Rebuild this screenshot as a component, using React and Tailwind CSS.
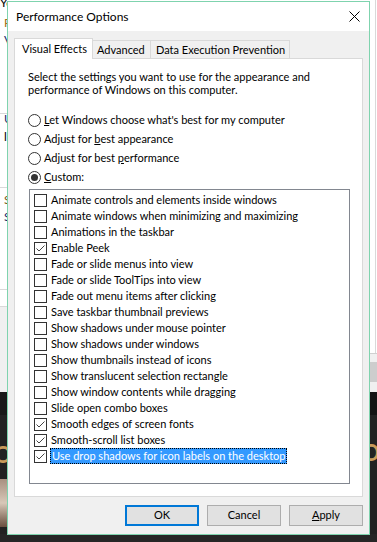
import React from "react";

const items = [
  ["Animate controls and elements inside windows", false],
  ["Animate windows when minimizing and maximizing", false],
  ["Animations in the taskbar", false],
  ["Enable Peek", true],
  ["Fade or slide menus into view", false],
  ["Fade or slide ToolTips into view", false],
  ["Fade out menu items after clicking", false],
  ["Save taskbar thumbnail previews", false],
  ["Show shadows under mouse pointer", false],
  ["Show shadows under windows", false],
  ["Show thumbnails instead of icons", false],
  ["Show translucent selection rectangle", false],
  ["Show window contents while dragging", false],
  ["Slide open combo boxes", false],
  ["Smooth edges of screen fonts", true],
  ["Smooth-scroll list boxes", true],
  ["Use drop shadows for icon labels on the desktop", true, true],
];

function Radio({ checked, children }) {
  return (
    <div className="flex items-center h-[19px]">
      <span className="w-[13px] h-[13px] rounded-full border border-[#333] bg-white flex items-center justify-center shrink-0">
        {checked && <span className="w-[7px] h-[7px] rounded-full bg-[#333]" />}
      </span>
      <span className="ml-[3px]">{children}</span>
    </div>
  );
}

function Check({ checked }) {
  return (
    <span className="w-[13px] h-[13px] border border-[#333] bg-white shrink-0 flex">
      {checked && (
        <svg width="11" height="11" viewBox="0 0 11 11">
          <polyline points="1.5,5.5 4,8 9.5,2.5" fill="none" stroke="#444" strokeWidth="1" />
        </svg>
      )}
    </span>
  );
}

export default function App() {
  return (
    <div className="w-[377px] h-[542px] flex overflow-hidden font-['Lato',sans-serif] text-[11px] text-black whitespace-nowrap">
      {/* left desktop strip */}
      <div className="w-[7px] h-full flex flex-col shrink-0 overflow-hidden text-[12px] leading-[14px]">
        <div className="h-[113px] bg-white">
          <div className="-mt-[4px]">Your</div>
          <div className="mt-[6px] pl-[4px] text-[#a0701a]">P</div>
          <div className="mt-[3px] pl-[4px] text-[#1b2a6b]">V</div>
        </div>
        <div className="h-[1px] bg-[#d9d9d9]" />
        <div className="h-[73px] bg-white">
          <div className="mt-[-2px] pl-[4px] text-[#1b2a6b]">U</div>
          <div className="mt-[4px] pl-[4px]">l</div>
        </div>
        <div className="h-[1px] bg-[#d9d9d9]" />
        <div className="h-[101px] bg-white">
          <div className="mt-[5px] pl-[4px] text-[#7a5a1a]">S</div>
          <div className="mt-[3px] pl-[4px] text-[#1b2a6b]">S</div>
        </div>
        <div className="h-[1px] bg-[#d9d9d9]" />
        <div className="h-[16px] bg-white" />
        <div className="h-[1px] bg-[#d9d9d9]" />
        <div className="h-[85px] bg-[#f0f0f0]" />
        <div className="h-[23px] bg-[#191919]" />
        <div className="flex-1 bg-[#222] flex flex-col">
          <div className="mt-[28px] text-[22px] leading-[24px] font-bold text-[#c89a5a] -ml-[6px]">O</div>
          <div className="mt-[12px] h-[48px] w-[7px] bg-gradient-to-b from-[#a89080] via-[#d8c8b8] to-[#6a5040]" />
        </div>
        <div className="h-[8px] bg-[#262626]" />
      </div>

      {/* dialog column */}
      <div className="w-[363px] h-full flex flex-col shrink-0">
        <div className="h-[1px] bg-white" />
        <div className="h-[534px] border border-[#7fd3ae] flex flex-col bg-[#f0f0f0]">
          {/* title bar */}
          <div className="h-[29px] bg-white flex items-center justify-between pl-[8px] pr-[9px]">
            <span className="text-[12px]">Performance Options</span>
            <svg width="11" height="11" viewBox="0 0 11 11">
              <path d="M0.5 0.5 L10.5 10.5 M10.5 0.5 L0.5 10.5" stroke="#000" strokeWidth="1" />
            </svg>
          </div>
          {/* body */}
          <div className="flex-1 flex flex-col pt-[7px] pl-[6px] pr-[6px]">
            {/* tabs */}
            <div className="flex items-end h-[20px] relative z-10">
              <div className="h-[21px] -mb-[1px] w-[79px] bg-white border border-b-0 border-[#d9d9d9] pl-[7px] leading-[19px]">
                Visual Effects
              </div>
              <div className="h-[18px] w-[58px] border border-l-0 border-b-0 border-[#d9d9d9] pl-[4px] leading-[18px]">
                Advanced
              </div>
              <div className="h-[18px] w-[139px] border border-l-0 border-b-0 border-[#d9d9d9] pl-[5px] leading-[18px]">
                Data Execution Prevention
              </div>
            </div>
            {/* panel */}
            <div className="h-[439px] bg-white border border-[#d9d9d9] pl-[13px] pt-[11px] flex flex-col">
              <div className="leading-[13px]">
                <div>Select the settings you want to use for the appearance and</div>
                <div>performance of Windows on this computer.</div>
              </div>
              <div className="mt-[15px] flex flex-col">
                <Radio><u>L</u>et Windows choose what's best for my computer</Radio>
                <Radio>Adjust for <u>b</u>est appearance</Radio>
                <Radio>Adjust for best <u>p</u>erformance</Radio>
                <Radio checked><u>C</u>ustom:</Radio>
              </div>
              <div className="mt-[2px] ml-[1px] w-[321px] h-[295px] border border-[#828790] pt-[2px] pl-[4px]">
                {items.map(([label, checked, sel]) => (
                  <div key={label} className="h-[16px] flex items-center">
                    <Check checked={checked} />
                    <span
                      className={
                        sel
                          ? "ml-[3px] px-[1px] h-[16px] leading-[14px] bg-[#3399ff] text-white border border-dotted border-black"
                          : "ml-[4px] leading-[16px]"
                      }
                    >
                      {label}
                    </span>
                  </div>
                ))}
              </div>
            </div>
            {/* buttons */}
            <div className="mt-[8px] flex justify-end gap-[8px]">
              <div className="w-[74px] h-[21px] bg-[#e1e1e1] border-2 border-[#0078d7] flex items-center justify-center">
                OK
              </div>
              <div className="w-[74px] h-[21px] bg-[#e1e1e1] border border-[#adadad] flex items-center justify-center">
                Cancel
              </div>
              <div className="w-[74px] h-[21px] bg-[#e1e1e1] border border-[#adadad] flex items-center justify-center">
                <span><u>A</u>pply</span>
              </div>
            </div>
          </div>
        </div>
        <div className="flex-1 bg-[#262626]" />
      </div>

      {/* right desktop strip */}
      <div className="w-[7px] h-full flex flex-col shrink-0 overflow-hidden">
        <div className="h-[353px] bg-white flex">
          <div className="w-[5px]" />
          <div className="w-[1px] bg-[#d9d9d9]" />
        </div>
        <div className="h-[1px] bg-[#d0d0d0]" />
        <div className="h-[8px] bg-[#f0f0f0]" />
        <div className="h-[20px] bg-[#cdcdcd]" />
        <div className="h-[10px] bg-[#f0f0f0]" />
        <div className="h-[23px] bg-[#141414]" />
        <div className="flex-1 bg-[#222] flex flex-col">
          <div className="mt-[26px] text-[22px] leading-[24px] font-bold text-[#c89a5a] -ml-[8px]">O</div>
        </div>
        <div className="h-[8px] bg-[#262626]" />
      </div>
    </div>
  );
}
